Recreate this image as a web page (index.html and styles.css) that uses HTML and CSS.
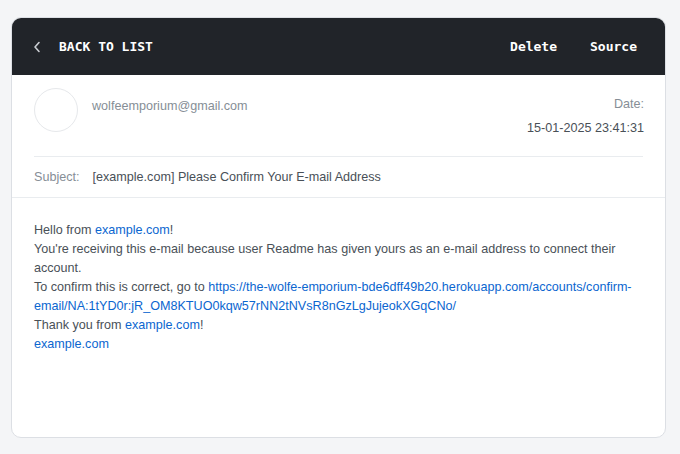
FILE: index.html
```html
<!DOCTYPE html>
<html>
<head>
<meta charset="utf-8">
<link rel="stylesheet" href="styles.css">
</head>
<body>
<div class="card">
  <div class="topbar">
    <a class="back">
      <svg class="chev" width="8" height="12" viewBox="0 0 8 12"><path d="M6 1.5 L2 6 L6 10.5" fill="none" stroke="#c9ccd1" stroke-width="1.6" stroke-linecap="round" stroke-linejoin="round"/></svg>
      <span>BACK TO LIST</span>
    </a>
    <div class="actions">
      <a class="action">Delete</a>
      <a class="action">Source</a>
    </div>
  </div>
  <div class="head">
    <div class="meta">
      <div class="avatar"></div>
      <div class="from">wolfeemporium@gmail.com</div>
      <div class="date">
        <div class="date-label">Date:</div>
        <div class="date-value">15-01-2025 23:41:31</div>
      </div>
    </div>
    <div class="subject">
      <span class="subject-label">Subject:</span>
      <span class="subject-value">[example.com] Please Confirm Your E-mail Address</span>
    </div>
  </div>
  <div class="body">
    <p>Hello from <a href="#">example.com</a>!<br>
    You're receiving this e-mail because user Readme has given yours as an e-mail address to connect their account.<br>
    To confirm this is correct, go to <a href="#">https://the-wolfe-emporium-bde6dff49b20.herokuapp.com/accounts/confirm-email/NA:1tYD0r:jR_OM8KTUO0kqw57rNN2tNVsR8nGzLgJujeokXGqCNo/</a><br>
    Thank you from <a href="#">example.com</a>!<br>
    <a href="#">example.com</a></p>
  </div>
</div>
</body>
</html>
```
FILE: styles.css
```css
* { box-sizing: border-box; }
html, body { margin: 0; height: 100%; }
body {
  background: #f4f5f7;
  padding: 17px 14px 17px 11px;
  font-family: "Liberation Sans", Arial, sans-serif;
  font-size: 12.6px;
  color: #495057;
}
.card {
  height: 421px;
  background: #fff;
  border: 1px solid #dcdfe4;
  border-radius: 10px;
  overflow: hidden;
  display: flex;
  flex-direction: column;
}
.topbar {
  height: 58px;
  flex: none;
  background: #212429;
  display: flex;
  align-items: center;
  justify-content: space-between;
  padding: 0 29px 0 22px;
  font-family: "DejaVu Sans Mono", monospace;
  font-weight: bold;
  font-size: 13px;
  color: #fff;
  margin: -1px -1px 0 -1px;
}
.back {
  display: flex;
  align-items: center;
  gap: 18px;
  padding-top: 1px;
}
.chev { display: block; }
.actions {
  display: flex;
  gap: 33px;
  padding-top: 1px;
}
.head { padding: 0 22px; }
.meta {
  display: flex;
  align-items: flex-start;
  height: 82px;
  padding-top: 13px;
  border-bottom: 1px solid #e9ecef;
}
.avatar {
  width: 44px;
  height: 44px;
  border-radius: 50%;
  border: 1px solid #e6e8eb;
  flex: none;
}
.from {
  margin-left: 14px;
  margin-top: 9px;
  line-height: 19px;
  color: #868e96;
  flex: 1;
}
.date {
  text-align: right;
  line-height: 19px;
  margin-top: 7px;
  margin-right: -1px;
}
.date-label { color: #868e96; }
.date-value { margin-top: 5px; color: #495057; }
.subject {
  height: 40px;
  display: flex;
  align-items: center;
  gap: 13px;
}
.subject-label { color: #868e96; }
.subject-value { color: #495057; }
.body {
  border-top: 1px solid #e9ecef;
  padding: 23px 22px;
}
.body p {
  margin: 0;
  line-height: 19px;
}
.body a {
  color: #0b66d0;
  text-decoration: none;
}
```
